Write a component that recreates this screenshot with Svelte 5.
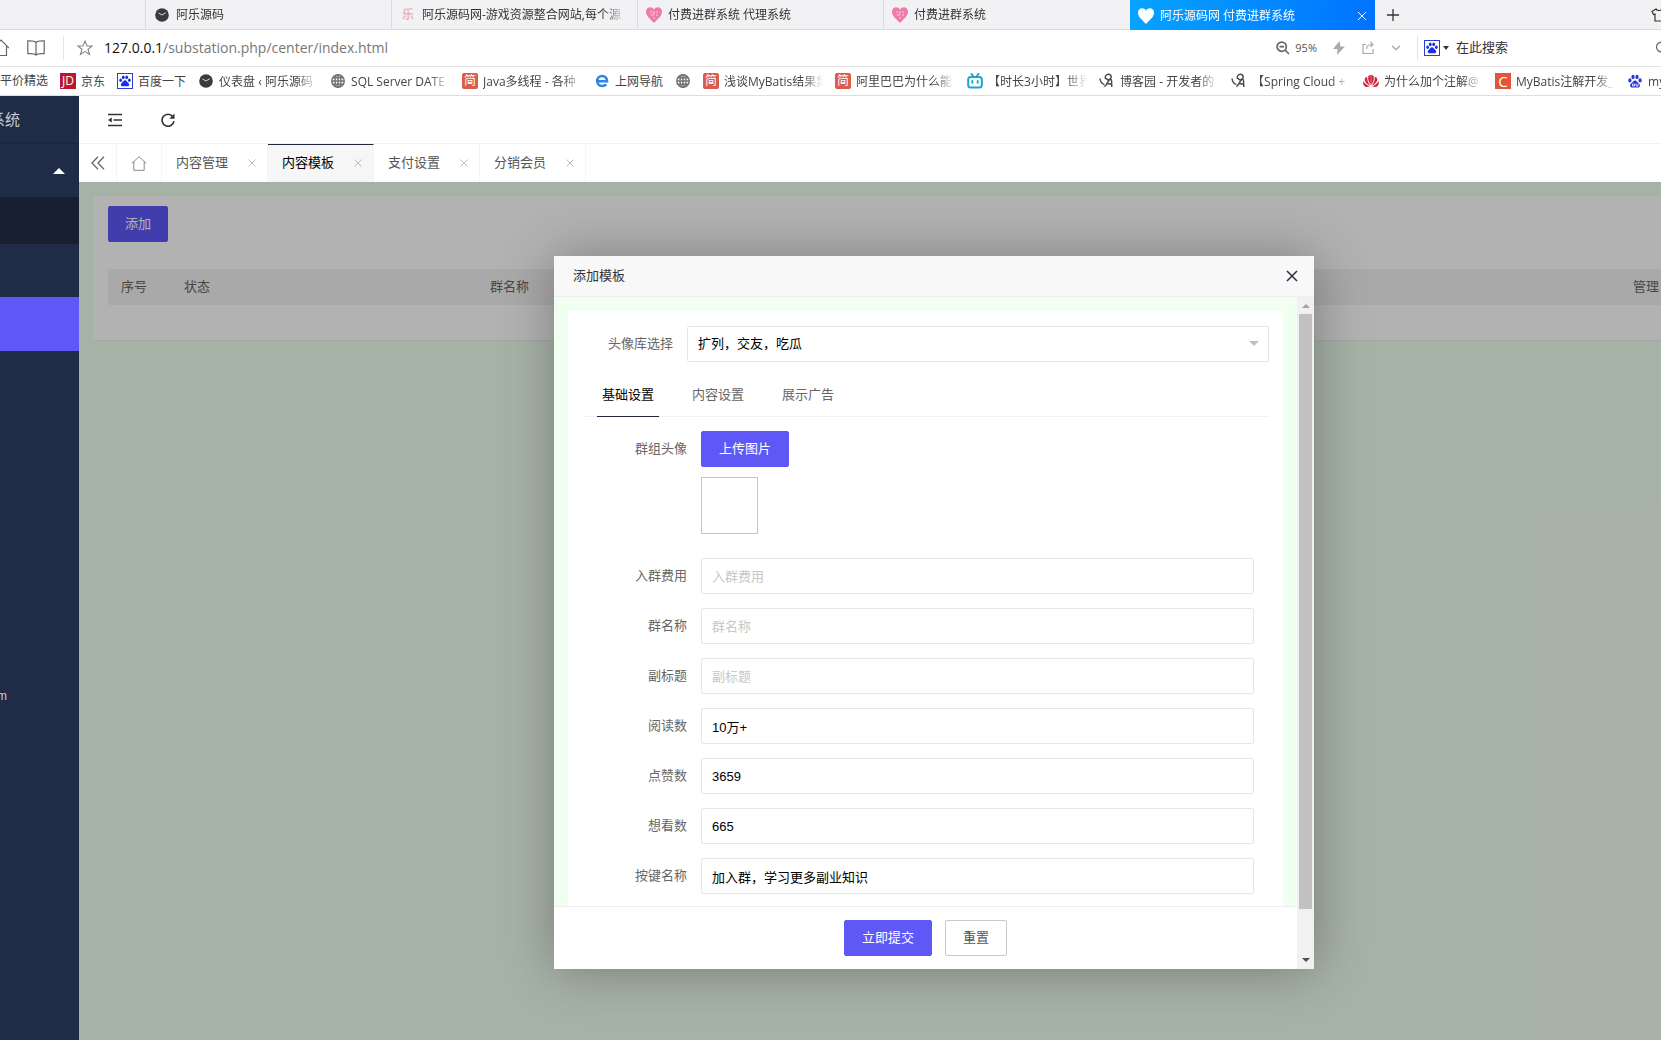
<script lang="ts">
	type Site = { icon: string; title: string; full?: boolean };

	const browserTabs: Site[] = [
		{ icon: 'clock', title: '阿乐源码' },
		{ icon: 'le', title: '阿乐源码网-游戏资源整合网站,每个源' },
		{ icon: 'pinkheart', title: '付费进群系统 代理系统' },
		{ icon: 'pinkheart', title: '付费进群系统' }
	];

	const bookmarks: Site[] = [
		{ icon: 'jd', title: '京东' },
		{ icon: 'pawbox', title: '百度一下' },
		{ icon: 'clock', title: '仪表盘 ‹ 阿乐源码', full: true },
		{ icon: 'globe', title: 'SQL Server DATE', full: true },
		{ icon: 'jian', title: 'Java多线程 - 各种', full: true },
		{ icon: 'edge', title: '上网导航' },
		{ icon: 'globe', title: '' },
		{ icon: 'jian', title: '浅谈MyBatis结果集', full: true },
		{ icon: 'jian', title: '阿里巴巴为什么能', full: true },
		{ icon: 'bili', title: '【时长3小时】世界', full: true },
		{ icon: 'cnblogs', title: '博客园 - 开发者的', full: true },
		{ icon: 'cnblogs', title: '【Spring Cloud +', full: true },
		{ icon: 'huawei', title: '为什么加个注解@', full: true },
		{ icon: 'c', title: 'MyBatis注解开发_', full: true },
		{ icon: 'paw', title: 'mybatis', full: true }
	];

	const pageTabs = ['内容管理', '内容模板', '支付设置', '分销会员'];
	let activePage = $state('内容模板');

	const formTabs = ['基础设置', '内容设置', '展示广告'];
	let activeForm = $state('基础设置');

	let fields = $state([
		{ id: 'price', label: '入群费用', placeholder: '入群费用', value: '' },
		{ id: 'title', label: '群名称', placeholder: '群名称', value: '' },
		{ id: 'subtitle', label: '副标题', placeholder: '副标题', value: '' },
		{ id: 'reads', label: '阅读数', placeholder: '', value: '10万+' },
		{ id: 'likes', label: '点赞数', placeholder: '', value: '3659' },
		{ id: 'wants', label: '想看数', placeholder: '', value: '665' },
		{ id: 'button', label: '按键名称', placeholder: '', value: '加入群，学习更多副业知识' }
	]);
</script>

{#snippet paw()}
	<ellipse cx="2.9" cy="7.4" rx="1.6" ry="2.1" />
	<ellipse cx="6" cy="3.9" rx="1.6" ry="2.2" />
	<ellipse cx="10" cy="3.9" rx="1.6" ry="2.2" />
	<ellipse cx="13.1" cy="7.4" rx="1.6" ry="2.1" />
	<path d="M8 7.4c-1.6 0-2.2 1.5-3.3 2.5-1.4 1.2-1.9 2-1.5 3.3.5 1.5 2 1.4 4.8 1.2 2.8.2 4.3.3 4.8-1.2.4-1.3-.1-2.1-1.5-3.3C10.2 8.9 9.6 7.4 8 7.4z" />
{/snippet}

{#snippet icon(name: string)}
	{#if name === 'jd'}
		<span class="tile red">JD</span>
	{:else if name === 'jian'}
		<span class="tile coral">简</span>
	{:else if name === 'c'}
		<span class="tile orange">C</span>
	{:else if name === 'le'}
		<span class="tile le">乐</span>
	{:else}
		<svg class="fav" viewBox="0 0 16 16" aria-hidden="true">
			{#if name === 'clock'}
				<circle cx="8" cy="8" r="6.8" fill="#3a3b3d" />
				<path d="M4.5 6L8 8l3.8-2.3" fill="none" stroke="#d8d8d8" />
			{:else if name === 'pinkheart'}
				<path d="M8 16C5 12.5 0 9.5 0 4.8 0 1.8 2 .3 4 .3c1.7 0 3.2.8 4 2.4.8-1.6 2.3-2.4 4-2.4 2 0 4 1.5 4 4.5C16 9.5 11 12.5 8 16z" fill="#f07bab" />
				<path d="M4 5h2m2-1v3m3-3v2M5 8h3m2 0h2M8 10v2" stroke="#fbd0e2" fill="none" />
			{:else if name === 'whiteheart'}
				<path d="M8 16C5 12.5 0 9.5 0 4.8 0 1.8 2 .3 4 .3c1.7 0 3.2.8 4 2.4.8-1.6 2.3-2.4 4-2.4 2 0 4 1.5 4 4.5C16 9.5 11 12.5 8 16z" fill="#fff" />
			{:else if name === 'pawbox'}
				<rect x=".5" y=".5" width="15" height="15" fill="#fff" stroke="#2b3fd0" />
				<g fill="#1a2ee6" transform="translate(1.2 1) scale(.85)">{@render paw()}</g>
			{:else if name === 'paw'}
				<g fill="#2a35d8">{@render paw()}</g>
				<path d="M5.5 11h2v2h-2zM9 10.500V13h2v-2.500" fill="none" stroke="#fff" stroke-width=".8" />
			{:else if name === 'globe'}
				<g fill="none" stroke="#747474" stroke-width="1.5">
					<circle cx="8" cy="8" r="6.2" />
					<ellipse cx="8" cy="8" rx="3" ry="6.2" />
					<path d="M8 1.7v12.6M1.7 8h12.600M2.800 4.800h10.400M2.800 11.200h10.400" />
				</g>
			{:else if name === 'edge'}
				<path d="M3.7 8.300h9.300C13 5.200 11 3 8.100 3 5.300 3 3.200 5.100 3.200 8s2.100 5 5 5c1.700 0 3-.5 4.100-1.400" fill="none" stroke="#2f86e8" stroke-width="2.6" />
			{:else if name === 'bili'}
				<g fill="none" stroke="#1ea5cf" stroke-width="2" stroke-linecap="round">
					<rect x="1.2" y="4" width="13.6" height="10.5" rx="2.5" />
					<path d="M4.500 1l2 2.500M11.500 1l-2 2.500M5.300 8v1.700M10.700 8v1.700" />
				</g>
			{:else if name === 'cnblogs'}
				<path d="M1 5.500c.3 2 .8 5 4.300 6M6.500 6C5.500 3 7.500 1 9.800 1.200c2.700.2 3.200 3.500 1.200 5C9.500 7.300 7.300 6.800 7.300 5M5.300 13.500c2.200-.5 3.200-4.500 4.700-6.300 1-1.200 2.300-1.200 2.500.3L12.800 14M8.500 10.500l4 .7" fill="none" stroke="#4b4b4b" stroke-width="1.5" />
			{:else if name === 'huawei'}
				<g fill="#d9233f">
					<path d="M7.800 12.300C5.800 9.500 4.600 6 5.300 3.600c.5-1.200 1.600-1.700 2.500-1.800z" />
					<path d="M8.200 12.300c2-2.800 3.200-6.300 2.500-8.700-.5-1.200-1.600-1.700-2.500-1.800z" />
					<path d="M7.200 12.700C4 11.300 1.400 8.300 1.700 6.200c.2-1.400 1.300-2.200 2.400-2.500C4.200 7 5.200 10 7.200 12.700z" />
					<path d="M8.800 12.700c3.200-1.400 5.800-4.400 5.500-6.500-.2-1.400-1.300-2.200-2.400-2.500C11.800 7 10.800 10 8.800 12.700z" />
					<path d="M6.700 13.300c-1.500.5-3.200.8-4.300.4C.5 13-.2 10.300.3 8c1.500 2.500 3.700 4.300 6.400 5.300z" />
					<path d="M9.300 13.300c1.500.5 3.200.8 4.300.4 1.900-.7 2.600-3.400 2.100-5.700-1.500 2.500-3.700 4.300-6.400 5.300z" />
				</g>
			{/if}
		</svg>
	{/if}
{/snippet}

<div class="window">
	<div class="tabstrip">
		<div class="btab first"></div>
		{#each browserTabs as tab}
			<div class="btab">
				{@render icon(tab.icon)}
				<span class="btitle">{tab.title}</span>
			</div>
		{/each}
		<div class="btab current">
			{@render icon('whiteheart')}
			<span class="btitle">阿乐源码网 付费进群系统</span>
			<button class="plain" aria-label="关闭标签页">
				<svg width="10" height="10" viewBox="0 0 10 10"><path d="M1 1l8 8M9 1L1 9" stroke="#fff" fill="none" /></svg>
			</button>
		</div>
		<button class="plain newtab" aria-label="新标签页">
			<svg width="12" height="12" viewBox="0 0 12 12"><path d="M6 0v12M0 6h12" stroke="#333" stroke-width="1.300" fill="none" /></svg>
		</button>
		<svg class="shirt" width="16" height="14" viewBox="0 0 16 14" fill="none" stroke="#333" stroke-width="1.200">
			<path d="M5 1L1 3.500l1.500 3L4 6v7h8V6l1.500.5 1.500-3L11 1c-.7 2-5.300 2-6 0z" />
		</svg>
	</div>

	<div class="addressbar">
		<svg class="homecut" width="16" height="18" viewBox="0 0 16 18" fill="none" stroke="#666" stroke-width="1.200">
			<path d="M0 9l8-8 8 8M2.500 7v9.500h11V7" />
		</svg>
		<svg class="book" width="18" height="16" viewBox="0 0 18 16" fill="none" stroke="#666" stroke-width="1.200">
			<path d="M9 2.500C7.500.7 4 .7.8.9v12.800C4 13.500 7.500 13.500 9 15c1.500-1.500 5-1.500 8.200-1.300V.9C14 .7 10.500.7 9 2.500zM9 2.500V15" />
		</svg>
		<span class="rule"></span>
		<svg class="star" width="16" height="16" viewBox="0 0 16 16" fill="none" stroke="#888" stroke-width="1.100">
			<path d="M8 1l2 5h5.200l-4.200 3.200L12.500 14.500 8 11.300 3.500 14.500 5 9.200.8 6H6z" />
		</svg>
		<span class="url"><b>127.0.0.1</b>/substation.php/center/index.html</span>
		<div class="tools">
			<svg width="14" height="14" viewBox="0 0 14 14" fill="none" stroke="#666" stroke-width="1.700">
				<circle cx="5.700" cy="5.700" r="4.600" /><path d="M9 9l4 4M3.500 5.700H8" />
			</svg>
			<span class="zoom">95%</span>
			<svg width="12" height="14" viewBox="0 0 12 14" fill="#aaa"><path d="M6.500 0L0 8h4.500L4 14 12 5.500H7.500z" /></svg>
			<svg width="12" height="14" viewBox="0 0 12 14" fill="none" stroke="#aaa" stroke-width="1.200">
				<path d="M4 3.500H1v9h10V8M4.500 8C4.500 5 6.500 3.500 10 3.500M8.500 1L11 3.500 8.500 6" />
			</svg>
			<svg width="10" height="6" viewBox="0 0 10 6" fill="none" stroke="#aaa" stroke-width="1.300"><path d="M1 .8l4 4 4-4" /></svg>
		</div>
		<div class="search">
			{@render icon('pawbox')}
			<span class="caret"></span>
			<span class="hint">在此搜索</span>
			<svg class="lens" width="14" height="14" viewBox="0 0 14 14" fill="none" stroke="#666" stroke-width="1.200">
				<circle cx="6.500" cy="6" r="5" /><path d="M10 10l3.500 3.500" />
			</svg>
		</div>
	</div>

	<div class="bookmarks">
		<a class="bookmark" href="#平价精选">平价精选</a>
		{#each bookmarks as mark}
			<a class="bookmark" href="#{mark.icon}" aria-label={mark.title || '网页'}>
				{@render icon(mark.icon)}
				{#if mark.title}
					<span class:full={mark.full}>{mark.title}</span>
				{/if}
			</a>
		{/each}
	</div>

	<div class="app">
		<aside class="sidebar">
			<div class="logo"><span>系统</span></div>
			<nav>
				<a class="group" href="#menu" aria-label="菜单"><span class="up"></span></a>
				<a class="sub" href="#content" aria-label="内容管理"></a>
				<a class="group" href="#pay" aria-label="支付设置"></a>
				<a class="group on" href="#template" aria-label="内容模板"></a>
			</nav>
			<div class="site">m</div>
		</aside>

		<main>
			<header class="toolbar">
				<button class="plain" aria-label="侧边伸缩">
					<svg width="14" height="14" viewBox="0 0 14 14" fill="none" stroke="#333" stroke-width="1.500">
						<path d="M0 1.500h14M5.500 7H14M0 12.500h14" /><path d="M3.800 4.500v5L0 7z" fill="#333" stroke="none" />
					</svg>
				</button>
				<button class="plain" aria-label="刷新">
					<svg width="14" height="14" viewBox="0 0 14 14" fill="none" stroke="#333" stroke-width="1.600">
						<path d="M11.800 3.500A6 6 0 1 0 13 8.200" /><path d="M13.500.5v5.200H8.300z" fill="#333" stroke="none" />
					</svg>
				</button>
			</header>

			<div class="pagetabs">
				<button class="plain back" aria-label="向左">
					<svg width="14" height="14" viewBox="0 0 14 14" fill="none" stroke="#666" stroke-width="1.300"><path d="M7 .8L1 7l6 6.200M13 .8L7 7l6 6.200" /></svg>
				</button>
				<button class="plain home" aria-label="主页">
					<svg width="16" height="15" viewBox="0 0 16 15" fill="none" stroke="#888"><path d="M.8 7.300L8 .8l7.200 6.500M2.800 6v8.300h10.400V6" /></svg>
				</button>
				{#each pageTabs as tab}
					<div class="pagetab" class:active={tab === activePage}>
						<button class="plain name" onclick={() => (activePage = tab)}>{tab}</button>
						<button class="plain" aria-label="关闭 {tab}">
							<svg width="8" height="8" viewBox="0 0 8 8"><path d="M.5.5l7 7M7.500.5l-7 7" stroke="#bbb" fill="none" /></svg>
						</button>
					</div>
				{/each}
			</div>

			<div class="content">
				<section class="card">
					<button class="btn primary add">添加</button>
					<table>
						<thead>
							<tr>
								<th class="no">序号</th>
								<th class="state">状态</th>
								<th>群名称</th>
								<th class="manage">管理</th>
							</tr>
						</thead>
					</table>
				</section>
				<div class="shade"></div>

				<div class="dialog" role="dialog" aria-labelledby="dialog-title">
					<div class="dialog-title">
						<span id="dialog-title">添加模板</span>
						<button class="plain" aria-label="关闭">
							<svg width="12" height="12" viewBox="0 0 12 12"><path d="M1 1l10 10M11 1L1 11" stroke="#2e2d3c" stroke-width="1.500" fill="none" /></svg>
						</button>
					</div>
					<div class="dialog-body">
						<form class="frame" onsubmit={(e) => e.preventDefault()}>
							<div class="sheet">
								<div class="panel">
									<div class="row">
										<label class="short" for="library">头像库选择</label>
										<div class="select">
											<select id="library">
												<option>扩列，交友，吃瓜</option>
											</select>
										</div>
									</div>

									<div class="formtabs" role="tablist">
										{#each formTabs as tab}
											<button
												type="button"
												role="tab"
												class="plain formtab"
												class:active={tab === activeForm}
												aria-selected={tab === activeForm}
												onclick={() => (activeForm = tab)}>{tab}</button
											>
										{/each}
									</div>

									<div class="fields">
										<div class="row upload">
											<label for="avatar">群组头像</label>
											<div class="avatar">
												<button type="button" id="avatar" class="btn primary">上传图片</button>
												<div class="preview"></div>
											</div>
										</div>
										{#each fields as field}
											<div class="row">
												<label for={field.id}>{field.label}</label>
												<input id={field.id} type="text" placeholder={field.placeholder} bind:value={field.value} />
											</div>
										{/each}
									</div>
								</div>
							</div>
							<div class="actions">
								<button type="submit" class="btn primary">立即提交</button>
								<button type="reset" class="btn">重置</button>
							</div>
						</form>
						<div class="scrollbar" aria-hidden="true">
							<span class="arrow top"></span>
							<span class="thumb"></span>
							<span class="arrow bottom"></span>
						</div>
					</div>
				</div>
			</div>
		</main>
	</div>
</div>

<style>
	:global(body) {
		margin: 0;
		overflow: hidden;
	}

	.window {
		display: flex;
		flex-direction: column;
		min-height: 100vh;
		overflow: hidden;
		background: #fff;
		color: #333;
		font: 13px/20px 'Liberation Sans', 'Noto Sans CJK SC', sans-serif;
	}

	.window * {
		box-sizing: border-box;
	}

	button,
	input,
	select {
		font: inherit;
	}

	svg {
		display: block;
		flex: none;
	}

	.plain {
		display: flex;
		align-items: center;
		justify-content: center;
		padding: 0;
		border: 0;
		background: none;
		color: inherit;
		cursor: pointer;
	}

	/* favicons */
	.fav,
	.tile {
		width: 16px;
		height: 16px;
		flex: none;
	}

	.tile {
		color: #fff;
		font: 12px/16px 'Open Sans', 'Noto Sans CJK SC', sans-serif;
		text-align: center;
	}

	.tile.red {
		background: #b8172c;
	}

	.tile.coral {
		border-radius: 2px;
		background: #d95c4c;
	}

	.tile.orange {
		background: #e3553b;
		font-size: 15px;
	}

	.tile.le {
		color: #ecb3bf;
		font-weight: 700;
	}

	/* browser tabs */
	.tabstrip {
		display: flex;
		height: 30px;
		border-bottom: 1px solid #dcdce0;
		background: #f2f2f4;
		font: 12px/16px 'Open Sans', 'Noto Sans CJK SC', sans-serif;
	}

	.btab {
		display: flex;
		flex: none;
		align-items: center;
		gap: 6px;
		width: 246px;
		padding: 1px 8px 0;
		border-left: 1px solid #dcdce0;
	}

	.btab.first {
		width: 145px;
		border-left: 0;
	}

	.btitle {
		flex: 1;
		overflow: hidden;
		white-space: nowrap;
		mask-image: linear-gradient(to right, #000 180px, transparent 204px);
	}

	.btab.current {
		height: 30px;
		border-left-color: #f2f2f4;
		background: linear-gradient(100deg, #06a4ff, #0072ff) padding-box;
		color: #fff;
	}

	.newtab {
		width: 36px;
	}

	.shirt {
		margin: 8px -6px 0 auto;
	}

	/* address bar */
	.addressbar {
		display: flex;
		align-items: center;
		height: 37px;
		border-bottom: 1px solid #e2e2e2;
	}

	.homecut {
		margin-left: -7px;
	}

	.book {
		margin-left: 18px;
	}

	.rule {
		width: 1px;
		height: 24px;
		margin: 0 13px 0 18px;
		background: #e4e4e4;
	}

	.url {
		margin-left: 11px;
		color: #777;
		font: 14px/20px 'Open Sans', sans-serif;
	}

	.url b {
		color: #111;
		font-weight: 400;
	}

	.tools {
		display: flex;
		align-items: center;
		gap: 17px;
		margin-left: auto;
		padding-right: 16px;
	}

	.zoom {
		margin: 0 -1px 0 -12px;
		color: #555;
		font: 11px/16px 'Open Sans', sans-serif;
	}

	.search {
		display: flex;
		align-items: center;
		width: 244px;
		height: 24px;
		padding-left: 6px;
		border-left: 1px solid #e4e4e4;
	}

	.caret {
		margin: 0 7px 0 3px;
		border: 3px solid transparent;
		border-top: 4px solid #333;
		border-bottom: 0;
	}

	.lens {
		margin: 0 -8px 0 auto;
	}

	/* bookmarks */
	.bookmarks {
		display: flex;
		align-items: center;
		gap: 12px;
		height: 29px;
		border-bottom: 1px solid #dedede;
	}

	.bookmark {
		display: flex;
		flex: none;
		align-items: center;
		gap: 5px;
		color: #444;
		font: 12px/16px 'Open Sans', 'Noto Sans CJK SC', sans-serif;
		text-decoration: none;
		white-space: nowrap;
	}

	.bookmark span:not(.tile) {
		padding-top: 1px;
	}

	.full {
		width: 99px;
		overflow: hidden;
		mask-image: linear-gradient(to right, #000 78px, transparent);
	}

	/* shell */
	.app {
		display: flex;
		flex: 1;
	}

	.sidebar {
		flex: none;
		width: 79px;
		background: #202b48;
		color: #c9ccd4;
	}

	.logo {
		display: flex;
		justify-content: flex-end;
		width: 20px;
		height: 47px;
		overflow: hidden;
		font-size: 15px;
		line-height: 48px;
		white-space: nowrap;
	}

	.logo span {
		flex: none;
	}

	nav {
		border-top: 1px solid #1c2640;
	}

	.group,
	.sub {
		display: flex;
		align-items: center;
		justify-content: flex-end;
		height: 53px;
		padding-right: 14px;
	}

	.sub {
		height: 47px;
		background: #171f31;
	}

	.group.on {
		height: 54px;
		background: #5f58f6;
	}

	.up {
		border: 6px solid transparent;
		border-top: 0;
		border-bottom-color: #fff;
	}

	.site {
		display: flex;
		justify-content: flex-end;
		width: 7px;
		margin-top: 335px;
		font-size: 12px;
	}

	main {
		display: flex;
		flex: 1;
		flex-direction: column;
		min-width: 0;
	}

	.toolbar {
		display: flex;
		gap: 39px;
		height: 48px;
		padding-left: 29px;
		border-bottom: 1px solid #f4f4f4;
	}

	.pagetabs {
		display: flex;
		height: 38px;
		box-shadow: 0 1px 2px rgba(0, 0, 0, 0.15);
	}

	.back,
	.home {
		width: 38px;
		border-right: 1px solid #f4f4f4;
	}

	.home {
		width: 45px;
	}

	.pagetab {
		display: flex;
		align-items: center;
		gap: 20px;
		width: 106px;
		padding: 0 0 1px 14px;
		border-top: 1px solid transparent;
		border-right: 1px solid #f4f4f4;
		color: #555;
	}

	.pagetab .name {
		white-space: nowrap;
	}

	.pagetab.active {
		border-top-color: #20263f;
		background: #f6f6f6;
		color: #000;
	}

	.content {
		position: relative;
		flex: 1;
		padding: 14px 0 14px 14px;
		background: #f0fff0;
	}

	.card {
		padding: 10px 0 35px 15px;
		border-radius: 2px;
		background: #fff;
		box-shadow: 0 1px 2px rgba(0, 0, 0, 0.05);
	}

	.btn {
		height: 36px;
		padding: 0 17px 1px;
		border: 1px solid #c9c9c9;
		border-radius: 2px;
		background: #fff;
		color: #555;
		white-space: nowrap;
		cursor: pointer;
	}

	.btn.primary {
		border-color: #5f58f6;
		background: #5f58f6;
		color: #fff;
	}

	.btn.add {
		display: block;
		padding: 0 16px 1px;
	}

	table {
		width: 100%;
		margin-top: 27px;
		border-collapse: collapse;
		table-layout: fixed;
		background: #f2f2f2;
		color: #666;
	}

	th {
		height: 36px;
		padding: 0 0 1px 13px;
		font-weight: 400;
		text-align: left;
		white-space: nowrap;
	}

	.no {
		width: 63px;
	}

	.state {
		width: 306px;
	}

	.manage {
		width: 41px;
	}

	.shade {
		position: absolute;
		inset: 0;
		background: rgba(0, 0, 0, 0.3);
	}

	/* dialog */
	.dialog {
		position: absolute;
		top: 74px;
		left: 475px;
		width: 760px;
		background: #fff;
		box-shadow: 1px 1px 50px rgba(0, 0, 0, 0.3);
	}

	.dialog-title {
		display: flex;
		align-items: center;
		justify-content: space-between;
		height: 41px;
		padding: 0 16px 0 19px;
		border-bottom: 1px solid #eee;
		background: #f8f8f8;
	}

	.dialog-body {
		display: flex;
	}

	.frame {
		flex: 1;
		min-width: 0;
	}

	.sheet {
		padding: 14px 14px 0;
		background: #f0fff0;
	}

	.panel {
		padding: 15px 14px 12px 15px;
		background: #fff;
	}

	.row {
		display: flex;
	}

	label {
		flex: none;
		width: 118px;
		padding-right: 14px;
		color: #666;
		line-height: 36px;
		text-align: right;
	}

	label.short {
		width: 104px;
	}

	.select {
		position: relative;
		flex: 1;
	}

	.select::after {
		content: '';
		position: absolute;
		top: 15px;
		right: 10px;
		border: 5px solid transparent;
		border-top-color: #c2c2c2;
		border-bottom: 0;
		pointer-events: none;
	}

	select,
	input {
		width: 100%;
		height: 36px;
		padding: 0 10px;
		border: 1px solid #e6e6e6;
		border-radius: 2px;
		appearance: none;
		background: #fff;
		color: #000;
	}

	input {
		flex: 1;
		min-width: 0;
	}

	input::placeholder {
		color: #c8c8c8;
	}

	.formtabs {
		display: flex;
		gap: 28px;
		height: 41px;
		margin-top: 14px;
		padding-left: 14px;
		border-bottom: 1px solid #f2f2f2;
	}

	.formtab {
		width: 62px;
		height: 41px;
		padding-bottom: 2px;
		border-bottom: 1px solid transparent;
		color: #666;
		white-space: nowrap;
	}

	.formtab.active {
		border-bottom-color: #20263f;
		color: #000;
	}

	.fields {
		display: flex;
		flex-direction: column;
		gap: 14px;
		padding: 14px 15px 0 0;
	}

	.upload {
		padding-bottom: 10px;
	}

	.preview {
		width: 57px;
		height: 57px;
		margin-top: 10px;
		border: 1px solid #c4c4c4;
	}

	.actions {
		display: flex;
		justify-content: center;
		gap: 13px;
		height: 63px;
		padding: 13px 0 14px;
		border-top: 1px solid #eee;
	}

	.scrollbar {
		display: flex;
		flex-direction: column;
		align-items: center;
		width: 17px;
		background: #f1f1f1;
	}

	.thumb {
		width: 13px;
		height: 595px;
		margin: 6px 0 auto;
		background: #c1c1c1;
	}

	.arrow {
		border: 4px solid transparent;
	}

	.arrow.top {
		margin-top: 7px;
		border-top: 0;
		border-bottom-color: #a3a3a3;
	}

	.arrow.bottom {
		margin-bottom: 7px;
		border-top-color: #505050;
		border-bottom: 0;
	}
</style>
